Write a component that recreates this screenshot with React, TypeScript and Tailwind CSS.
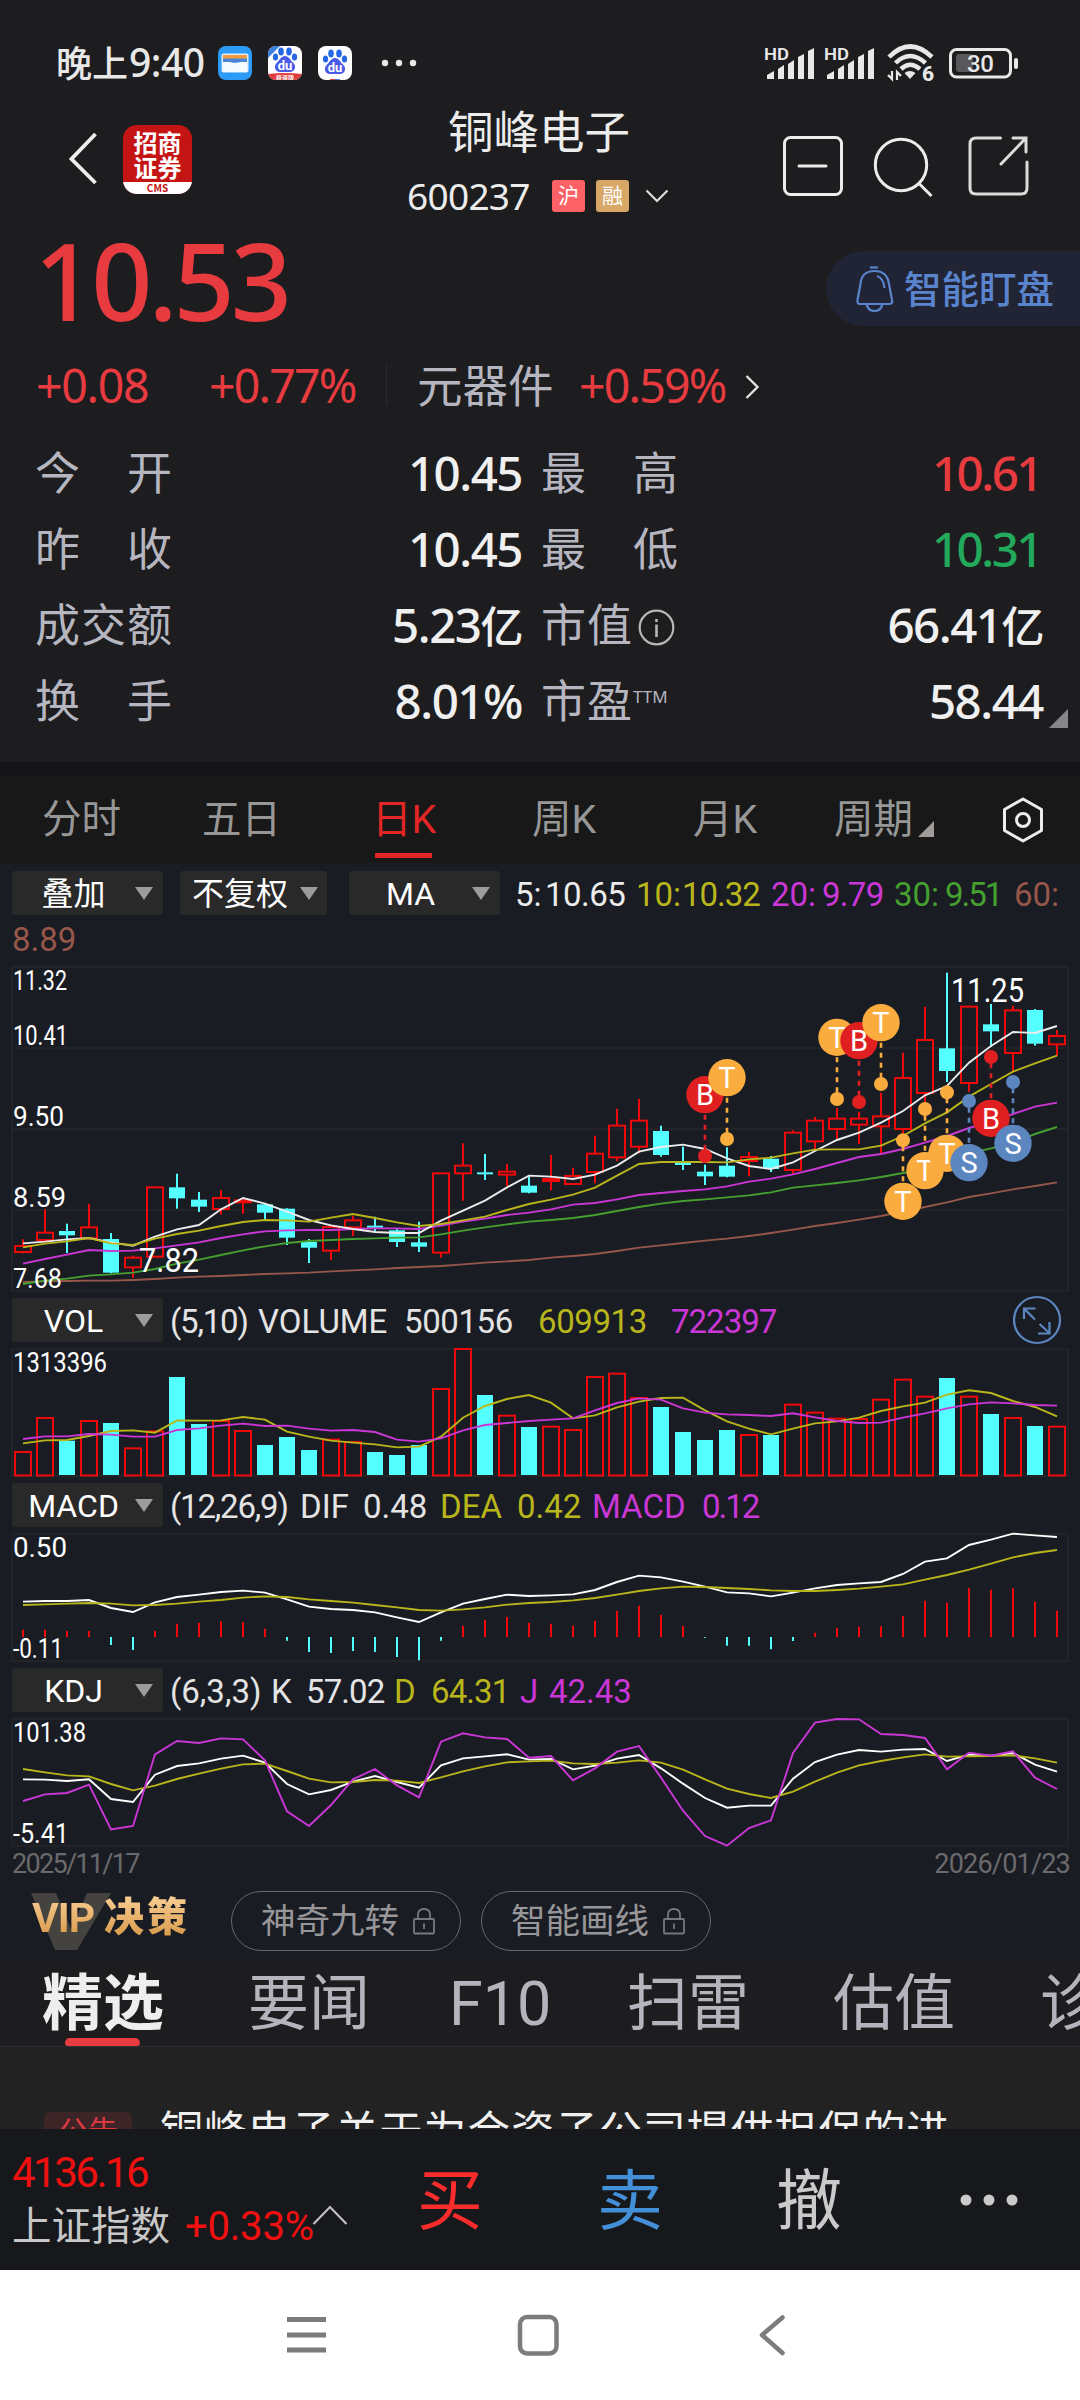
import type { ReactNode } from 'react';

const RED = '#ee0a0a';
const CYAN = '#54ffff';
const WHITE = '#ececec';
const YELLOW = '#b9b61c';
const MAGENTA = '#cb37d6';
const GREEN = '#45a02f';
const BROWN = '#96574a';
const FRAME = '#222327';

// x centre of a trading day inside the chart area
const dayX = (i: number) => 11 + i * 22;

// chart levels are stored in thirds of a pixel, relative to each pane's own origin
const toY = (v: number, top: number) => (v - top) / 3;

// up/down, wick top, body top, body bottom, wick bottom
type Candle = [0 | 1, number, number, number, number];

const candles: Candle[] = [
  [1, 1138, 1158, 1176, 1180], [1, 1048, 1118, 1140, 1140], [0, 1091, 1113, 1126, 1179],
  [1, 1031, 1102, 1135, 1135], [0, 1119, 1137, 1238, 1240], [1, 1187, 1193, 1222, 1253],
  [1, 980, 982, 1190, 1192], [0, 941, 982, 1015, 1046], [0, 996, 1019, 1040, 1056],
  [1, 990, 1014, 1047, 1064], [1, 1018, 1021, 1027, 1061], [0, 1030, 1033, 1058, 1077],
  [0, 1045, 1046, 1133, 1155], [0, 1137, 1146, 1163, 1209], [1, 1099, 1101, 1172, 1200],
  [1, 1067, 1081, 1102, 1128], [0, 1070, 1097, 1102, 1115], [0, 1104, 1111, 1146, 1161],
  [0, 1085, 1147, 1160, 1176], [1, 938, 940, 1178, 1193], [1, 850, 917, 940, 1022],
  [0, 882, 937, 943, 960], [1, 912, 935, 944, 978], [0, 950, 977, 998, 1000],
  [1, 885, 957, 963, 991], [1, 923, 948, 972, 972], [1, 827, 881, 936, 970],
  [1, 746, 797, 892, 903], [1, 717, 782, 860, 880], [0, 797, 813, 885, 890],
  [0, 860, 908, 915, 930], [0, 914, 935, 949, 975], [0, 862, 917, 950, 952],
  [1, 876, 891, 903, 949], [0, 888, 896, 927, 936], [1, 811, 818, 930, 942],
  [1, 771, 782, 844, 868], [1, 744, 776, 807, 838], [1, 755, 776, 794, 852],
  [1, 698, 769, 799, 884], [1, 578, 654, 807, 825], [1, 440, 540, 699, 730],
  [0, 338, 565, 633, 666], [1, 437, 440, 669, 695], [0, 432, 493, 514, 560],
  [1, 437, 451, 579, 632], [0, 447, 450, 551, 557], [1, 510, 528, 553, 588],
];

const ma5 = [1150, 1145, 1138, 1134, 1147, 1157, 1130, 1108, 1095, 1048, 1014, 1031, 1055, 1080, 1096, 1107, 1116, 1119, 1119, 1082, 1052, 1022, 982, 947, 950, 957, 944, 917, 875, 861, 854, 867, 895, 918, 927, 907, 873, 840, 818, 788, 753, 706, 678, 608, 558, 516, 519, 498];
const ma10 = [1162, 1151, 1144, 1134, 1150, 1155, 1136, 1122, 1112, 1098, 1086, 1080, 1081, 1085, 1073, 1062, 1074, 1087, 1098, 1092, 1081, 1070, 1050, 1032, 1019, 1004, 983, 947, 912, 906, 906, 906, 907, 898, 893, 880, 869, 868, 868, 857, 828, 790, 757, 710, 672, 635, 610, 587];
const ma20 = [1211, 1197, 1184, 1170, 1173, 1172, 1165, 1156, 1147, 1134, 1123, 1114, 1111, 1110, 1110, 1107, 1105, 1105, 1107, 1097, 1085, 1076, 1065, 1058, 1048, 1034, 1029, 1018, 1005, 999, 993, 988, 979, 965, 956, 943, 927, 909, 891, 882, 867, 848, 828, 804, 785, 762, 740, 728];
const ma30 = [1272, 1262, 1256, 1247, 1243, 1238, 1227, 1211, 1199, 1185, 1171, 1159, 1149, 1143, 1140, 1137, 1135, 1133, 1132, 1123, 1112, 1102, 1093, 1085, 1080, 1074, 1065, 1053, 1041, 1031, 1023, 1018, 1012, 1006, 997, 983, 976, 969, 961, 951, 939, 930, 905, 880, 865, 848, 822, 801];
const ma60 = [1266, 1264, 1263, 1262, 1262, 1260, 1257, 1253, 1250, 1248, 1245, 1242, 1240, 1238, 1234, 1231, 1228, 1224, 1221, 1218, 1213, 1208, 1204, 1200, 1193, 1188, 1182, 1173, 1163, 1156, 1149, 1142, 1136, 1128, 1119, 1109, 1098, 1089, 1079, 1068, 1055, 1041, 1027, 1011, 1000, 988, 978, 967];

// day, letter, badge level, dot level
const marks: [number, 'B' | 'T' | 'S', number, number][] = [
  [31, 'B', 704, 888], [32, 'T', 653, 837], [37, 'T', 532, 717], [38, 'B', 542, 726],
  [39, 'T', 488, 672], [40, 'T', 1024, 841], [41, 'T', 932, 747], [42, 'T', 880, 697],
  [43, 'S', 908, 723], [44, 'B', 775, 591], [45, 'S', 850, 666],
];
const markColor = { B: '#e02020', T: '#faad3e', S: '#5b86c0' };

const volumes = [486, 384, 452, 393, 399, 475, 424, 261, 402, 393, 423, 465, 441, 480, 449, 456, 486, 495, 465, 297, 177, 315, 377, 411, 410, 420, 261, 251, 324, 351, 426, 450, 420, 435, 435, 344, 368, 386, 387, 329, 269, 320, 264, 320, 372, 384, 408, 410];
const vol5 = [460, 451, 450, 438, 423, 421, 428, 391, 392, 391, 381, 389, 425, 440, 452, 458, 463, 472, 470, 440, 383, 348, 327, 315, 338, 385, 376, 352, 335, 324, 323, 361, 394, 416, 433, 416, 400, 394, 383, 363, 349, 338, 314, 301, 309, 333, 351, 379];
const vol10 = [447, 439, 439, 432, 434, 440, 440, 420, 415, 407, 401, 408, 407, 416, 422, 420, 426, 449, 455, 445, 421, 405, 399, 393, 389, 385, 361, 339, 325, 329, 355, 368, 373, 375, 378, 370, 382, 393, 399, 398, 383, 370, 355, 343, 337, 340, 345, 347];

const dif = [65, 63, 63, 60, 84, 96, 67, 51, 44, 36, 32, 38, 58, 80, 87, 90, 97, 112, 126, 97, 71, 57, 44, 48, 46, 43, 30, 6, -13, -8, 5, 20, 37, 40, 49, 38, 25, 15, 10, 6, -18, -55, -65, -105, -121, -139, -134, -129];
const dea = [75, 73, 71, 69, 71, 76, 75, 71, 65, 60, 53, 49, 51, 58, 63, 68, 75, 82, 90, 92, 88, 82, 74, 69, 66, 61, 54, 44, 33, 25, 20, 21, 24, 27, 31, 33, 33, 30, 26, 20, 13, -1, -15, -31, -49, -68, -81, -90];
const macd = [149, 149, 153, 153, 195, 210, 153, 131, 128, 124, 126, 146, 182, 216, 219, 213, 216, 231, 241, 182, 138, 120, 111, 128, 131, 137, 122, 93, 77, 104, 138, 173, 197, 197, 208, 183, 158, 144, 140, 139, 108, 62, 68, 24, 29, 25, 65, 92];

const kdjK = [597, 598, 602, 597, 656, 665, 583, 557, 549, 535, 526, 547, 611, 642, 629, 604, 587, 605, 622, 555, 534, 528, 522, 538, 536, 567, 556, 535, 524, 564, 610, 653, 682, 676, 676, 595, 545, 523, 509, 514, 508, 506, 542, 523, 526, 518, 553, 574];
const kdjD = [566, 576, 585, 588, 611, 630, 616, 596, 580, 565, 552, 550, 572, 595, 606, 605, 599, 601, 608, 591, 573, 558, 546, 543, 541, 549, 551, 547, 540, 547, 568, 597, 625, 641, 653, 634, 604, 577, 555, 542, 531, 522, 529, 528, 527, 525, 534, 547];
const kdjJ = [662, 642, 638, 613, 747, 737, 522, 482, 488, 474, 477, 540, 693, 737, 674, 597, 566, 615, 651, 484, 459, 471, 476, 532, 527, 600, 564, 514, 497, 592, 691, 767, 796, 743, 720, 518, 427, 416, 417, 461, 464, 473, 567, 517, 526, 513, 592, 626];

function Line({ data, top, color }: { data: number[]; top: number; color: string }) {
  const points = data.map((v, i) => `${dayX(i)},${toY(v, top)}`).join(' ');
  return <polyline points={points} fill="none" stroke={color} strokeWidth={1.9} />;
}

function AxisLabel({ x = 1, y, w, size = 27.5, children }: { x?: number; y: number; w: number; size?: number; children: string }) {
  return (
    <text x={x} y={y} textLength={w} lengthAdjust="spacingAndGlyphs" fontSize={size} fill="#fff">
      {children}
    </text>
  );
}

function Pane({ height, children }: { height: number; children: ReactNode }) {
  return (
    <svg width={1056} height={height} className="block overflow-visible mx-3">
      <rect x={0} y={0} width={1056} height={height} fill="none" stroke={FRAME} strokeWidth={2} />
      {children}
    </svg>
  );
}

function PriceChart() {
  const top = 321;
  return (
    <Pane height={324}>
      {[81, 162, 243].map((y) => (
        <line key={y} x1={0} x2={1056} y1={y} y2={y} stroke={FRAME} strokeWidth={2} />
      ))}
      {candles.map(([up, high, a, b, low], i) => {
        const x = dayX(i);
        const y1 = toY(a, top);
        const y2 = toY(b, top);
        if (!up) {
          return (
            <g key={i} fill={CYAN}>
              <rect x={x - 1} y={toY(high, top)} width={2} height={(low - high) / 3} />
              <rect x={x - 8} y={y1} width={16} height={Math.max(y2 - y1, 2)} />
            </g>
          );
        }
        return (
          <g key={i} stroke={RED} strokeWidth={2} fill="none">
            <line x1={x} x2={x} y1={toY(high, top)} y2={y1} />
            <line x1={x} x2={x} y1={y2} y2={toY(low, top)} />
            <rect x={x - 8} y={y1} width={16} height={y2 - y1} />
          </g>
        );
      })}
      <Line data={ma60} top={top} color={BROWN} />
      <Line data={ma30} top={top} color={GREEN} />
      <Line data={ma20} top={top} color={MAGENTA} />
      <Line data={ma5} top={top} color={WHITE} />
      <Line data={ma10} top={top} color={YELLOW} />
      <AxisLabel y={23} w={54}>11.32</AxisLabel>
      <AxisLabel y={78} w={55}>10.41</AxisLabel>
      <AxisLabel y={159} w={51}>9.50</AxisLabel>
      <AxisLabel y={240} w={53}>8.59</AxisLabel>
      <AxisLabel y={321} w={49}>7.68</AxisLabel>
      <AxisLabel x={127} y={305} w={60} size={34}>7.82</AxisLabel>
      <AxisLabel x={939} y={35} w={73} size={34}>11.25</AxisLabel>
      {marks.map(([day, letter, badge, dot]) => {
        const x = dayX(day);
        const y = toY(badge, top);
        const c = markColor[letter];
        return (
          <g key={day}>
            <line x1={x} x2={x} y1={y} y2={toY(dot, top)} stroke={c} strokeWidth={2.6} strokeDasharray="5 5" />
            <circle cx={x} cy={toY(dot, top)} r={7} fill={c} />
            <circle cx={x} cy={y} r={18.7} fill={c} />
            <text x={x} y={y + 10.5} textAnchor="middle" fontSize={29} fill="#fff">{letter}</text>
          </g>
        );
      })}
    </Pane>
  );
}

function VolumeChart() {
  const top = 177;
  return (
    <Pane height={127}>
      <AxisLabel y={23} w={94}>1313396</AxisLabel>
      {volumes.map((v, i) => {
        const y = toY(v, top);
        return candles[i][0] ? (
          <rect key={i} x={dayX(i) - 8} y={y} width={16} height={126.5 - y} fill="none" stroke={RED} strokeWidth={2} />
        ) : (
          <rect key={i} x={dayX(i) - 8} y={y} width={16} height={126 - y} fill={CYAN} />
        );
      })}
      <Line data={vol5} top={top} color={YELLOW} />
      <Line data={vol10} top={top} color={MAGENTA} />
    </Pane>
  );
}

function MacdChart() {
  const top = -138;
  const zero = toY(171, top);
  return (
    <Pane height={127}>
      {macd.map((v, i) => (
        <line key={i} x1={dayX(i)} x2={dayX(i)} y1={zero} y2={toY(v, top)} stroke={v > 171 ? CYAN : RED} strokeWidth={2} />
      ))}
      <Line data={dif} top={top} color="#fff" />
      <Line data={dea} top={top} color={YELLOW} />
      <AxisLabel y={23} w={54}>0.50</AxisLabel>
      <AxisLabel y={124} w={50}>-0.11</AxisLabel>
    </Pane>
  );
}

function KdjChart() {
  const top = 416;
  return (
    <Pane height={127}>
      <Line data={kdjK} top={top} color="#fff" />
      <Line data={kdjD} top={top} color={YELLOW} />
      <Line data={kdjJ} top={top} color={MAGENTA} />
      <AxisLabel y={23} w={73}>101.38</AxisLabel>
      <AxisLabel y={124} w={56}>-5.41</AxisLabel>
    </Pane>
  );
}

function Picker({ label, className = 'w-[151px]', labelClass = 'w-[123px]' }: { label: string; className?: string; labelClass?: string }) {
  return (
    <button className={`h-11 shrink-0 bg-[#292929] rounded-[3px] flex items-center text-white text-[32px] leading-[44px] ${className}`}>
      <span className={`text-center whitespace-nowrap shrink-0 pt-[2px] ${labelClass}`}>{label}</span>
      <svg width={18} height={13} viewBox="0 0 18 13" className="shrink-0">
        <path d="M0 0H18L9 13Z" fill="#9c9c9c" />
      </svg>
    </button>
  );
}

type Item = [string, string];

function Legend({ items }: { items: Item[] }) {
  return (
    <div className="flex h-11 text-[33px] leading-[47px] whitespace-pre">
      {items.map(([text, cls]) => (
        <span key={text} className={`shrink-0 ${cls}`}>{text}</span>
      ))}
    </div>
  );
}

function Signal() {
  return (
    <svg width={50} height={34} viewBox="0 0 50 34" fill="#e8e8e8" className="overflow-visible">
      <text x={-1} y={13.5} fontSize={17} fontWeight={600} textLength={25} lengthAdjust="spacingAndGlyphs">HD</text>
      <path d="M2 33V29L9 25V33ZM13 33V23L19 19V33ZM23 33V18L29 14V33ZM33 33V11L39 8V33ZM43 33V5L49 2V33Z" />
    </svg>
  );
}

function Paw({ top }: { top: number }) {
  return (
    <g transform={`translate(0 ${top})`}>
      <g fill="#2468e8">
        <ellipse cx={7.5} cy={13} rx={2.6} ry={3.6} />
        <ellipse cx={13} cy={7.5} rx={2.8} ry={4} />
        <ellipse cx={21} cy={7.5} rx={2.8} ry={4} />
        <ellipse cx={26.5} cy={13} rx={2.6} ry={3.6} />
        <path d="M17 12C21 12 22 16 25 18.500C29 22 27 28 22 28H12C7 28 5 22 9 18.500C12 16 13 12 17 12Z" fill="#4a5be8" />
      </g>
      <text x={17} y={26} textAnchor="middle" fontSize={13} fontWeight={700} fill="#fff">du</text>
    </g>
  );
}

function StatusBar() {
  return (
    <div className="flex items-center h-[42px] mt-[42px] pl-[56px] text-[#e8e8e8]">
      <div className="w-[162px] text-[36px] leading-[42px] font-medium whitespace-nowrap font-['Noto_Sans','Noto_Sans_CJK_SC',sans-serif]">
        晚上<span className="text-[39px] tracking-[-0.5px] ml-px">9:40</span>
      </div>
      <svg width={34} height={34} viewBox="0 0 34 34" className="mr-4">
        <rect width={34} height={34} rx={8} fill="#2c9bf8" />
        <rect x={3.5} y={7.5} width={27} height={19} rx={2} fill="#dfeefc" />
        <path d="M5 9H29V14H5Z" fill="#f59a3c" />
        <path d="M5 12.500H29V16H23C21 17 13 17 11 16H5Z" fill="#4a86d8" />
        <path d="M5 16H11C13 17.500 21 17.500 23 16H29V26H5Z" fill="#f5faff" />
      </svg>
      <svg width={34} height={34} viewBox="0 0 34 34" className="mr-4">
        <defs>
          <clipPath id="tile"><rect width={34} height={34} rx={8} /></clipPath>
        </defs>
        <g clipPath="url(#tile)">
          <rect width={34} height={34} fill="#fff" />
          <Paw top={-2} />
          <path d="M0 0H12L0 12Z" fill="#3d7fe0" />
          <path d="M0 28Q17 26 34 28V34H0Z" fill="#e03a3a" />
          <text x={17} y={33.5} textAnchor="middle" fontSize={6} fontWeight={700} fill="#fff">极速版</text>
        </g>
      </svg>
      <svg width={34} height={34} viewBox="0 0 34 34">
        <rect width={34} height={34} rx={8} fill="#fff" />
        <Paw top={0} />
        <path d="M12 33.500H17" stroke="#e03a3a" />
        <path d="M17 33.500H22" stroke="#4a7be8" />
      </svg>
      <svg width={36} height={8} viewBox="0 0 36 8" className="ml-[29px]" fill="#e8e8e8">
        <circle cx={4} cy={4} r={3.2} />
        <circle cx={18} cy={4} r={3.2} />
        <circle cx={32} cy={4} r={3.2} />
      </svg>
      <div className="flex items-center ml-[348px]">
        <Signal />
        <div className="ml-[10px]"><Signal /></div>
        <svg width={50} height={38} viewBox="0 0 50 38" className="ml-[12px]" fill="none" stroke="#e8e8e8">
          <path d="M2 13Q23 -8 45 13" strokeWidth={4.5} />
          <path d="M8.500 19Q23 5 38.500 19" strokeWidth={4.5} />
          <path d="M14 25Q23 16.500 33 25" strokeWidth={4.5} />
          <path d="M17.500 29Q23 25 28.500 29L23 35Z" fill="#e8e8e8" stroke="none" />
          <path d="M5 27V35L1 31M10 36V28L14 32" strokeWidth={2.2} />
          <text x={35} y={37} fontSize={21} fontWeight={800} fill="#e8e8e8" stroke="none">6</text>
        </svg>
        <svg width={70} height={32} viewBox="0 0 70 32" className="ml-[12px]">
          <rect x={1.5} y={2.5} width={60} height={27.5} rx={6} fill="none" stroke="#e8e8e8" strokeWidth={3} />
          <rect x={7} y={7} width={17} height={18} rx={3} fill="#58585a" />
          <rect x={65} y={11} width={4} height={11} rx={2} fill="#e8e8e8" />
          <text x={18} y={25} textLength={27} fontSize={24} fontWeight={500} fill="#e8e8e8">30</text>
        </svg>
      </div>
    </div>
  );
}

function TitleBar() {
  return (
    <div className="flex h-[134px]">
      <svg width={28} height={54} viewBox="0 0 28 54" className="ml-[69px] mt-[48px]">
        <path d="M26.500 2L2.500 27L26.500 51" fill="none" stroke="#eee" strokeWidth={3.8} />
      </svg>
      <div className="w-[69px] h-[69px] ml-[26px] mt-[41px] rounded-[14px] overflow-hidden bg-[#c41414] text-white font-bold font-['Noto_Sans_CJK_SC',sans-serif] flex flex-col">
        <div className="text-[24px] leading-[25px] h-[25px] text-center mt-[4px]">招商</div>
        <div className="text-[24px] leading-[25px] h-[25px] text-center">证券</div>
        <div className="mt-[3px] h-3 bg-white text-[#c41414] text-[10px] leading-[11px] text-center">CMS</div>
      </div>
      <div className="w-[427px] ml-[137px]">
        <div className="text-[45.5px] leading-[60px] mt-[20px] ml-[119px] text-[#ececec] whitespace-nowrap">铜峰电子</div>
        <div className="flex items-center h-10 mt-[12px] ml-[78px]">
          <span className="text-[37px] leading-[40px] tracking-[-0.7px] w-[145px] text-[#ececec] font-['Noto_Sans','Noto_Sans_CJK_SC',sans-serif]">600237</span>
          <span className="w-[33px] h-8 mr-[11px] rounded-[3px] bg-[#fc6165] text-white text-[21px] leading-[33px] text-center">沪</span>
          <span className="w-[33px] h-8 rounded-[3px] bg-[#d8a766] text-white text-[21px] leading-[33px] text-center">融</span>
          <svg width={24} height={14} viewBox="0 0 24 14" className="ml-4">
            <path d="M1.500 1.500L12 12L22.500 1.500" fill="none" stroke="#ddd" strokeWidth={2.2} />
          </svg>
        </div>
      </div>
      <div className="flex mt-[51px] ml-[26px]">
        <svg width={62} height={62} viewBox="0 0 62 62" fill="none" stroke="#ececec" strokeWidth={3}>
          <rect x={2.5} y={2.5} width={57} height={57} rx={6} />
          <path d="M17 31H44" strokeLinecap="round" />
        </svg>
        <svg width={62} height={64} viewBox="0 0 62 64" className="ml-[29px]" fill="none" stroke="#ececec" strokeWidth={3}>
          <circle cx={28} cy={30} r={25.7} />
          <path d="M46.500 49L58.500 61" />
        </svg>
        <svg width={62} height={62} viewBox="0 0 62 62" className="ml-[32px]" fill="none" stroke="#dcdcdc" strokeWidth={3} strokeLinecap="round">
          <path d="M33.500 3H9Q3 3 3 9V53Q3 59 9 59H54Q60 59 60 53V27" />
          <path d="M46 3H59V17M58 4L34 29" />
        </svg>
      </div>
    </div>
  );
}

const quotes = [
  ['今　开', '10.45', '最　高', '10.61', 'tracking-[-2.5px] text-[#e83b40] mr-[2px]'],
  ['昨　收', '10.45', '最　低', '10.31', 'tracking-[-2.5px] text-[#22a95c] mr-[2px]'],
  ['成交额', '5.23亿', '市值', '66.41亿', 'tracking-[-1.5px] text-[#f0f0f0]'],
  ['换　手', '8.01%', '市盈', '58.44', 'tracking-[-1.5px] text-[#f0f0f0]'],
];

function Quote() {
  return (
    <section className="h-[762px] bg-[#1d1d1f] overflow-hidden">
      <StatusBar />
      <TitleBar />
      <div className="flex justify-between h-[126px] font-['Noto_Sans','Noto_Sans_CJK_SC',sans-serif]">
        <div className="text-[107px] leading-[120px] font-medium tracking-[-4px] text-[#e83b40] ml-[34px] mt-[2px]">10.53</div>
        <div className="w-[254px] h-[75px] mt-[33px] rounded-l-full bg-[#202434] flex items-center text-[#5b84cf]">
          <svg width={38} height={46} viewBox="0 0 38 46" className="ml-[30px]" fill="none" stroke="#5b84cf" strokeWidth={2.2}>
            <path d="M14 1.500H22" />
            <path d="M18.500 5C9 5 5 11 4.500 18L1.500 34Q1 38 4 38H33Q37 38 36 34L33 18C32 11 28 5 18.500 5Z" />
            <path d="M21 10Q27.500 12 28.500 22" />
            <path d="M10.500 38Q12 45 18.500 45Q25 45 26.500 38" />
          </svg>
          <span className="text-[37.5px] leading-[75px] font-medium ml-[10px] whitespace-nowrap">智能盯盘</span>
        </div>
      </div>
      <div className="flex items-center h-[60px] mt-[11px] text-[46.5px] leading-[60px] tracking-[-1.3px] text-[#e83b40] whitespace-nowrap font-['Noto_Sans','Noto_Sans_CJK_SC',sans-serif]">
        <span className="ml-[36px] w-[173px]">+0.08</span>
        <span className="w-[177px] tracking-[-1.8px]">+0.77%</span>
        <span className="w-px h-10 bg-[#2c2c30] mr-[30px]" />
        <span className="w-[162px] text-[45.5px] tracking-normal text-[#b6b6c0]">元器件</span>
        <span className="w-[166px] tracking-[-1.8px]">+0.59%</span>
        <svg width={14} height={26} viewBox="0 0 14 26" className="mt-1">
          <path d="M1.500 2L12.500 13L1.500 24" fill="none" stroke="#e0e0e0" strokeWidth={2.4} />
        </svg>
      </div>
      <div className="relative mt-[20px] text-[45px] leading-[76px] whitespace-nowrap font-['Noto_Sans','Noto_Sans_CJK_SC',sans-serif]">
        {quotes.map(([l1, v1, l2, v2, cls]) => (
          <div key={l1} className="flex h-[76px] pl-[35px] pr-[37px]">
            <span className="w-[160px] tracking-[1px] text-[#b6b6c0]">{l1}</span>
            <span className="w-[327px] text-right text-[47.5px] font-medium tracking-[-1.5px] text-[#f0f0f0]">
              {v1.replace('亿', '')}
              {v1.endsWith('亿') && <span className="text-[43px]">亿</span>}
            </span>
            <span className="ml-[19px] tracking-[1px] text-[#b6b6c0] flex items-center">
              {l2}
              {l2 === '市值' && (
                <svg width={37} height={37} viewBox="0 0 37 37" className="ml-[5px] mt-1" fill="none" stroke="#b6b6b6" strokeWidth={2.2}>
                  <circle cx={18.5} cy={18.5} r={16.8} />
                  <path d="M18.500 15.500V28M18.500 10V13" strokeWidth={2.6} />
                </svg>
              )}
              {l2 === '市盈' && <span className="text-[17px] leading-[18px] tracking-normal -mt-[8px]">TTM</span>}
            </span>
            <span className={`ml-auto text-[47.5px] font-medium ${cls}`}>
              {v2.replace('亿', '')}
              {v2.endsWith('亿') && <span className="text-[43px]">亿</span>}
            </span>
          </div>
        ))}
        <svg width={19} height={19} viewBox="0 0 19 19" className="absolute right-3 bottom-[11px]">
          <path d="M19 0V19H0Z" fill="#87878b" />
        </svg>
      </div>
    </section>
  );
}

function PeriodTabs() {
  return (
    <nav className="h-[101px] bg-[#181818] border-t-[14px] border-[#151517] flex items-center text-[39.5px] leading-[88px] text-[#979797] whitespace-nowrap">
      <span className="ml-[42px] w-[160px]">分时</span>
      <span className="w-[170px]">五日</span>
      <span className="relative w-[160px] text-[#e22626]">
        日K
        <span className="absolute left-[3px] top-[77px] w-[57px] h-[5px] bg-[#e22626]" />
      </span>
      <span className="w-[161px]">周K</span>
      <span className="w-[141px]">月K</span>
      <span>周期</span>
      <svg width={16} height={16} viewBox="0 0 16 16" className="ml-[5px] mt-[18px]">
        <path d="M16 0V16H0Z" fill="#a09a98" />
      </svg>
      <svg width={42} height={46} viewBox="0 0 42 46" className="ml-[68px]" fill="none" stroke="#ececec" strokeWidth={3}>
        <path d="M21 2L39.500 12.500V33.500L21 44L2.500 33.500V12.500Z" strokeLinejoin="round" />
        <circle cx={21} cy={23} r={6.5} />
      </svg>
    </nav>
  );
}

function VipRow() {
  return (
    <div className="flex items-center h-[58px] mt-3">
      <div className="relative ml-[31px] w-[200px] h-[58px]">
        <svg width={82} height={58} viewBox="0 0 82 58" className="absolute left-0 top-[1px]">
          <path d="M0 0H25L40 36L56 0H80L46 57H24Z" fill="#45433f" />
        </svg>
        <span className="relative flex items-center leading-[52px] whitespace-nowrap bg-linear-to-b from-[#fbd39a] to-[#d3913a] bg-clip-text text-transparent">
          <span className="text-[41px] font-bold tracking-[-1px] w-[72px] ml-px">VIP</span>
          <span className="text-[40px] font-black tracking-[3px]">决策</span>
        </span>
      </div>
      {['神奇九转', '智能画线'].map((name) => (
        <div key={name} className="w-[230px] h-[60px] mr-[20px] rounded-full border border-[#66686c] flex items-center pl-[29px] text-[34.5px] leading-[60px] text-[#97979a] whitespace-nowrap">
          {name}
          <svg width={22} height={27} viewBox="0 0 22 27" className="ml-[14px]" fill="none" stroke="#77787c" strokeWidth={1.8}>
            <rect x={1} y={11} width={20} height={14.5} rx={1} />
            <path d="M5 11V7Q5 1 11 1Q17 1 17 7V11M11 15.500V21" />
          </svg>
        </div>
      ))}
    </div>
  );
}

function Charts() {
  return (
    <section className="h-[1096px] bg-[#1a1c24] pt-2">
      <div className="flex pl-3">
        <Picker label="叠加" />
        <Picker label="不复权" className="w-[147px] ml-[17px]" labelClass="w-[120px]" />
        <Picker label="MA" className="w-[151px] ml-[22px] mr-[15px]" />
        <Legend
          items={[
            ['5:', 'w-[30px] text-[#ececec]'],
            ['10.65', 'w-[91px] tracking-[-0.5px] text-[#ececec]'],
            ['10:', 'w-[46px] text-[#b9b61c]'],
            ['10.32', 'w-[89px] tracking-[-1px] text-[#b9b61c]'],
            ['20:', 'w-[51px] text-[#cb37d6]'],
            ['9.79', 'w-[72px] tracking-[-0.7px] text-[#cb37d6]'],
            ['30:', 'w-[51px] text-[#45a02f]'],
            ['9.51', 'w-[69px] tracking-[-2px] text-[#45a02f]'],
            ['60:', 'text-[#96574a]'],
          ]}
        />
      </div>
      <div className="h-[52px] pl-3 text-[33px] leading-[50px] text-[#96574a]">8.89</div>
      <PriceChart />
      <div className="flex items-center my-[7px] pl-3 pr-[18px]">
        <Picker label="VOL" />
        <Legend
          items={[
            ['(5,10)', 'ml-[7px] w-[88px] tracking-[-1.2px] text-[#e4e4e4]'],
            ['VOLUME', 'w-[146px] text-[#e4e4e4]'],
            ['500156', 'w-[134px] tracking-[-0.4px] text-[#e4e4e4]'],
            ['609913', 'w-[133px] tracking-[-0.4px] text-[#b9b61c]'],
            ['722397', 'tracking-[-1px] text-[#cb37d6]'],
          ]}
        />
        <svg width={50} height={50} viewBox="0 0 50 50" className="ml-auto -my-[3px]" fill="none" stroke="#5b86c0" strokeWidth={2.2}>
          <circle cx={25} cy={25} r={23} />
          <path d="M12 24V13.500H23.500M12.500 14L23 24.500M27.500 29L38 38.500M37.500 27V38.500H26" />
        </svg>
      </div>
      <VolumeChart />
      <div className="flex my-[7px] pl-3">
        <Picker label="MACD" />
        <Legend
          items={[
            ['(12,26,9)', 'ml-[7px] w-[130px] tracking-[-1.2px] text-[#e4e4e4]'],
            ['DIF', 'w-[63px] text-[#e4e4e4]'],
            ['0.48', 'w-[77px] text-[#e4e4e4]'],
            ['DEA', 'w-[77px] text-[#b9b61c]'],
            ['0.42', 'w-[75px] text-[#b9b61c]'],
            ['MACD', 'w-[110px] text-[#cb37d6]'],
            ['0.12', 'tracking-[-2px] text-[#cb37d6]'],
          ]}
        />
      </div>
      <MacdChart />
      <div className="flex my-[7px] pl-3">
        <Picker label="KDJ" />
        <Legend
          items={[
            ['(6,3,3)', 'ml-[7px] w-[101px] text-[#e4e4e4]'],
            ['K', 'w-[35px] text-[#e4e4e4]'],
            ['57.02', 'w-[88px] tracking-[-0.9px] text-[#e4e4e4]'],
            ['D', 'w-[37px] text-[#b9b61c]'],
            ['64.31', 'w-[89px] tracking-[-0.9px] text-[#b9b61c]'],
            ['J', 'w-[29px] text-[#cb37d6]'],
            ['42.43', 'text-[#cb37d6]'],
          ]}
        />
      </div>
      <KdjChart />
      <div className="flex justify-between pl-3 pr-[10px] h-[34px] text-[27px] leading-[36px] text-[#6a6a6c]">
        <span className="tracking-[-1.7px]">2025/11/17</span>
        <span className="tracking-[-0.8px]">2026/01/23</span>
      </div>
      <VipRow />
    </section>
  );
}

function InfoTabs() {
  return (
    <nav className="h-[88px] bg-[#1d1d1f] border-b border-[#303034] flex overflow-hidden text-[61px] leading-[90px] text-[#b4b4bd] whitespace-nowrap">
      <span className="relative ml-[42px] w-[206px] font-bold text-[#eee] shrink-0">
        精选
        <span className="absolute left-[23px] top-[79px] w-[75px] h-2 rounded-t-md rounded-b-sm bg-[#e83b40]" />
      </span>
      <span className="w-[201px] shrink-0">要闻</span>
      <span className="w-[178px] shrink-0">F10</span>
      <span className="w-[206px] shrink-0">扫雷</span>
      <span className="w-[207px] shrink-0">估值</span>
      <span className="shrink-0">诊</span>
    </nav>
  );
}

function BottomBar() {
  return (
    <footer className="h-[141px] bg-[#17181c] flex items-center whitespace-nowrap">
      <div className="w-[406px] pl-[12px]">
        <div className="text-[42px] leading-[53px] tracking-[-2.5px] text-[#f01010]">4136.16</div>
        <div className="flex text-[39.5px] leading-[55px] text-[#c8c8c8]">
          上证指数
          <span className="text-[40px] tracking-[-0.2px] text-[#f01010] ml-[15px] w-[128px]">+0.33%</span>
          <svg width={36} height={20} viewBox="0 0 36 20" className="mt-[6px] -ml-[1px]">
            <path d="M1.500 19L18 2L34.500 19" fill="none" stroke="#c0c0c0" strokeWidth={2.2} />
          </svg>
        </div>
      </div>
      <span className="w-[180px] ml-[11px] text-[66px] leading-[80px] pt-1 text-[#fa2c2c]">买</span>
      <span className="w-[179px] text-[66px] leading-[80px] pt-1 text-[#4390d8]">卖</span>
      <span className="w-[184px] text-[66px] leading-[80px] pt-1 text-[#cacaca]">撤</span>
      <svg width={60} height={12} viewBox="0 0 60 12" fill="#cacaca">
        <circle cx={6} cy={6} r={5.5} />
        <circle cx={29} cy={6} r={5.5} />
        <circle cx={52} cy={6} r={5.5} />
      </svg>
    </footer>
  );
}

export default function App() {
  return (
    <div className="w-[1080px] h-[2400px] overflow-hidden bg-white font-[Roboto,'Noto_Sans_CJK_SC',sans-serif]">
      <Quote />
      <PeriodTabs />
      <Charts />
      <InfoTabs />
      <div className="h-[82px] bg-[#222222] overflow-hidden flex whitespace-nowrap">
        <span className="ml-[44px] mt-[65px] w-[88px] h-10 rounded-md bg-[#3c2427] text-[#d83a3e] text-[30px] leading-10 text-center">公告</span>
        <span className="ml-[28px] mt-[55px] text-[43px] leading-[60px] tracking-[0.9px] text-[#f0f0f0]">铜峰电子关于为合资子公司提供担保的进</span>
      </div>
      <BottomBar />
      <div className="h-[130px] bg-white flex pt-[44px]">
        <svg width={40} height={42} viewBox="0 0 40 42" className="ml-[287px]" stroke="#7c7c7c" strokeWidth={5}>
          <path d="M0 5.500H39M0 21H39M0 36H39" />
        </svg>
        <svg width={42} height={42} viewBox="0 0 42 42" className="ml-[190px]" fill="none" stroke="#7c7c7c" strokeWidth={4.5}>
          <rect x={3} y={3} width={36.5} height={36.5} rx={7} />
        </svg>
        <svg width={28} height={42} viewBox="0 0 28 42" className="ml-[200px]" fill="none" stroke="#7c7c7c" strokeWidth={4.5} strokeLinejoin="round" strokeLinecap="round">
          <path d="M23.500 3.500L3 21L23.500 39" />
        </svg>
      </div>
    </div>
  );
}
